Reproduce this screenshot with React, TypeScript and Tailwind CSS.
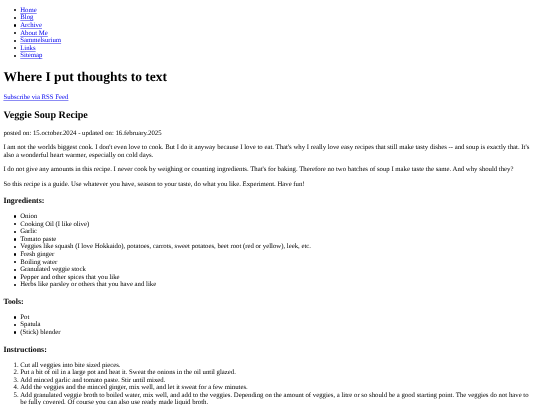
const navLinks = ['Home', 'Blog', 'Archive', 'About Me', 'Sammelsurium', 'Links', 'Sitemap'];

const ingredients = [
  'Onion',
  'Cooking Oil (I like olive)',
  'Garlic',
  'Tomato paste',
  'Veggies like squash (I love Hokkaido), potatoes, carrots, sweet potatoes, beet root (red or yellow), leek, etc.',
  'Fresh ginger',
  'Boiling water',
  'Granulated veggie stock',
  'Pepper and other spices that you like',
  'Herbs like parsley or others that you have and like',
];

const tools = ['Pot', 'Spatula', '(Stick) blender'];

const instructions = [
  'Cut all veggies into bite sized pieces.',
  'Put a bit of oil in a large pot and heat it. Sweat the onions in the oil until glazed.',
  'Add minced garlic and tomato paste. Stir until mixed.',
  'Add the veggies and the minced ginger, mix well, and let it sweat for a few minutes.',
  'Add granulated veggie broth to boiled water, mix well, and add to the veggies. Depending on the amount of veggies, a litre or so should be a good starting point. The veggies do not have to be fully covered. Of course you can also use ready made liquid broth.',
];

const linkClass = 'text-[#0000ee] underline decoration-[#8c8cf4]';
const subheadClass = 'my-[7.875px] text-[7.9px] leading-[9.1px] font-bold';
const bulletClass = 'relative before:absolute before:top-[2.4px] before:left-[-6.7px] before:size-[2.3px] before:rounded-full before:bg-black';

export default function App() {
  return (
    <div className="h-[405px] overflow-hidden bg-white px-[3.375px] font-['Liberation_Serif',serif] text-[6.75px] leading-[7.59px] text-black blur-[0.3px] [text-rendering:geometricPrecision]">
      <ul className="pt-[6.75px] pl-[16.875px]">
        {navLinks.map((link) => (
          <li key={link} className={bulletClass}>
            <a href="#" className={linkClass}>
              {link}
            </a>
          </li>
        ))}
      </ul>

      <h1 className="my-[9.05px] text-[13.5px] leading-[15.6px] font-bold">Where I put thoughts to text</h1>

      <p className="my-[9.05px]">
        <a href="#" className={linkClass}>
          Subscribe via RSS Feed
        </a>
      </p>

      <h2 className="my-[8.4px] text-[10.125px] leading-[11.4px] font-bold">Veggie Soup Recipe</h2>

      <p className="my-[6.75px]">posted on: 15.october.2024 - updated on: 16.february.2025</p>
      <p className="my-[6.75px]">
        I am not the worlds biggest cook. I don't even love to cook. But I do it anyway because I love to eat. That's why I really love easy recipes that still make tasty dishes -- and soup is exactly that. It's also a wonderful heart warmer, especially on cold days.
      </p>
      <p className="my-[6.75px]">
        I do not give any amounts in this recipe. I never cook by weighing or counting ingredients. That's for baking. Therefore no two batches of soup I make taste the same. And why should they?
      </p>
      <p className="my-[6.75px]">
        So this recipe is a guide. Use whatever you have, season to your taste, do what you like. Experiment. Have fun!
      </p>

      <h3 className={subheadClass}>Ingredients:</h3>
      <ul className="my-[6.75px] pl-[16.875px]">
        {ingredients.map((item) => (
          <li key={item} className={bulletClass}>{item}</li>
        ))}
      </ul>

      <h3 className={subheadClass}>Tools:</h3>
      <ul className="my-[6.75px] pl-[16.875px]">
        {tools.map((item) => (
          <li key={item} className={bulletClass}>{item}</li>
        ))}
      </ul>

      <h3 className={subheadClass}>Instructions:</h3>
      <ol className="my-[6.75px] list-decimal pl-[16.875px]">
        {instructions.map((item) => (
          <li key={item}>{item}</li>
        ))}
      </ol>
    </div>
  );
}
